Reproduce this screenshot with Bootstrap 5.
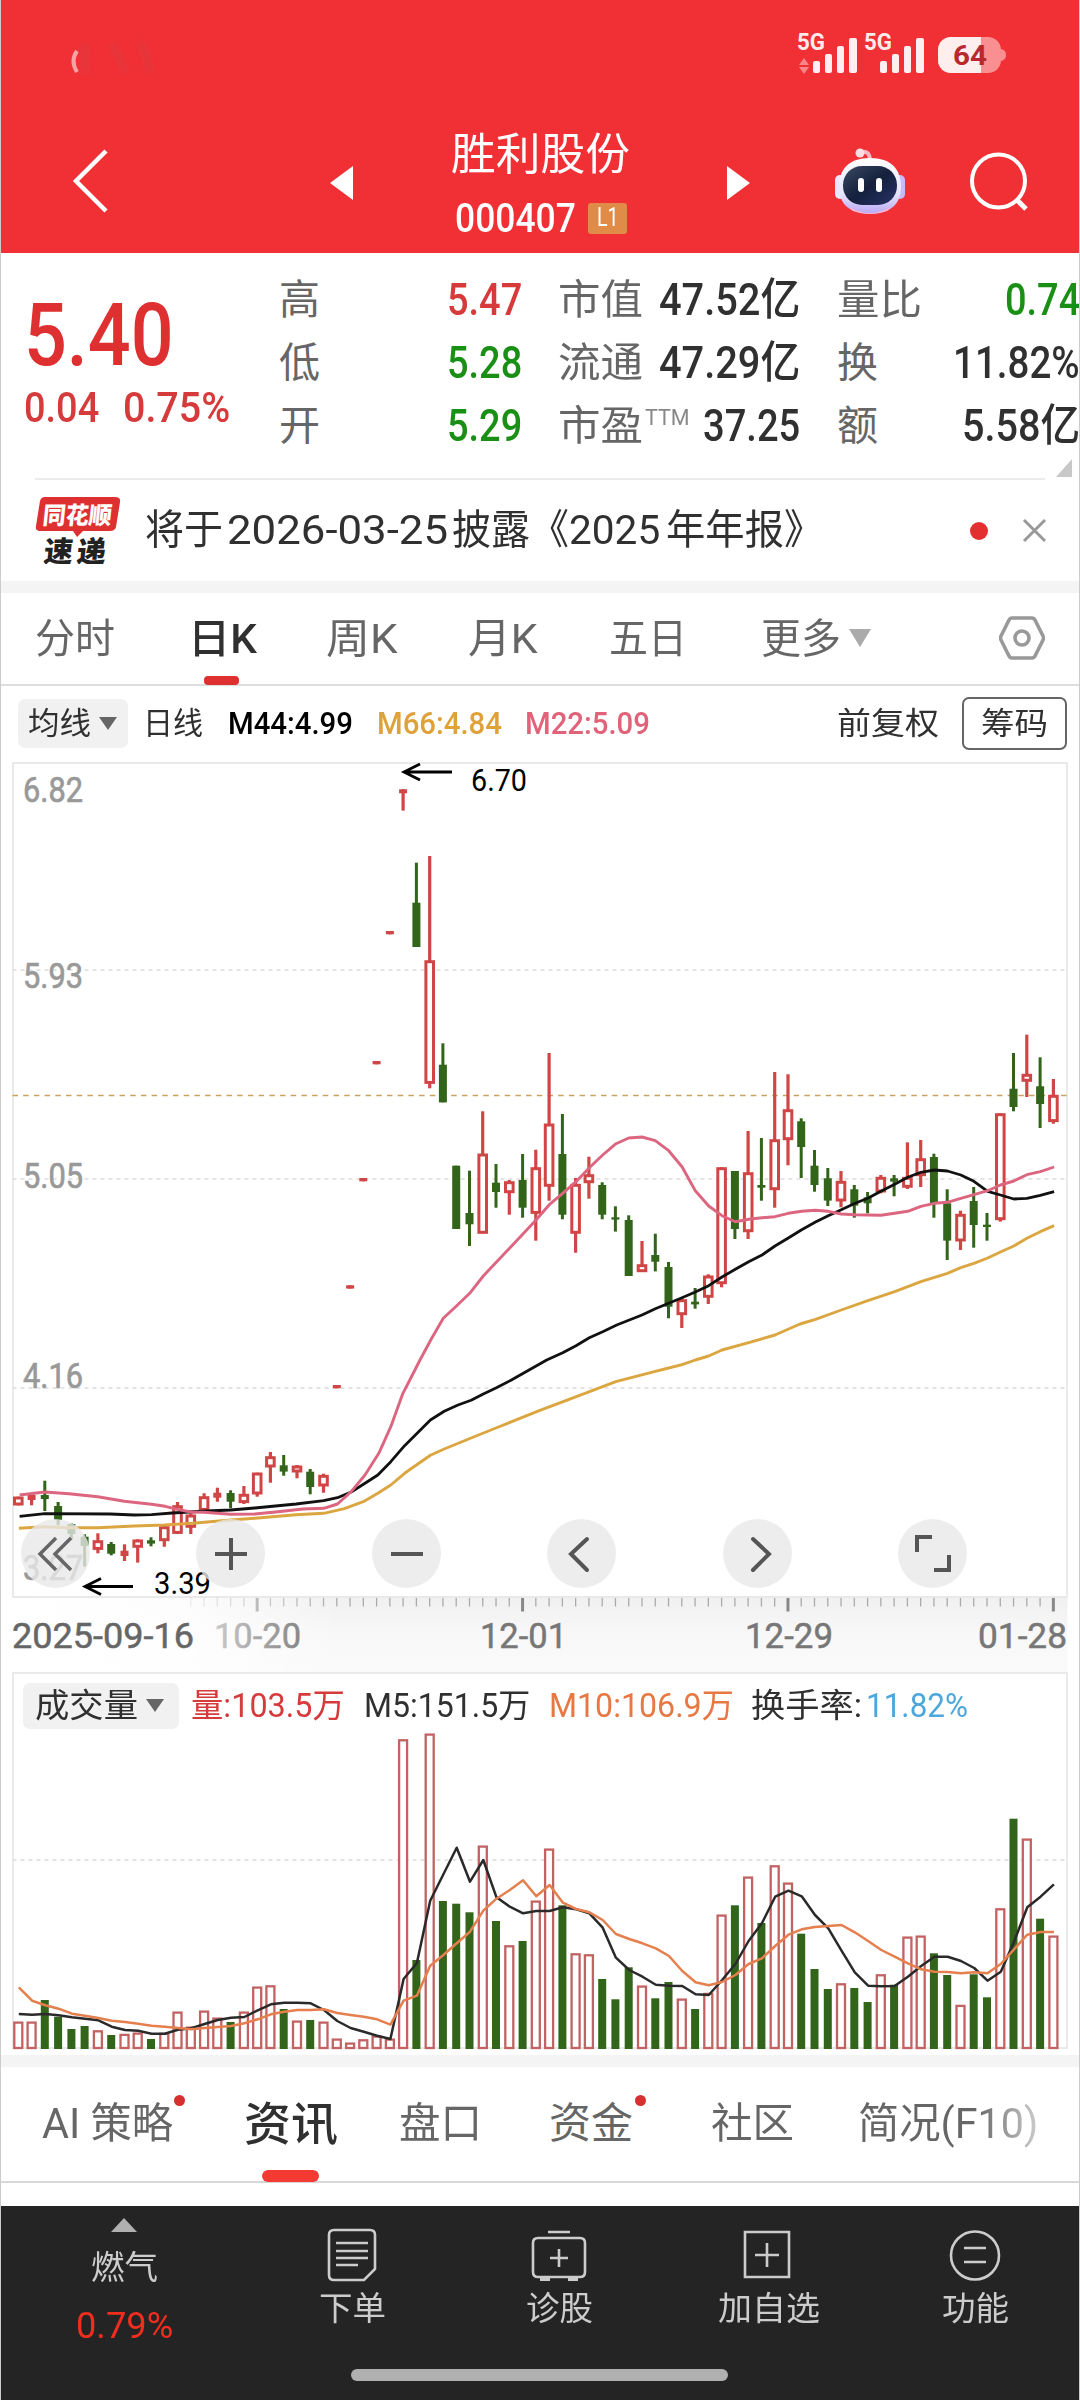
<!DOCTYPE html>
<html lang="zh-CN">
<head>
<meta charset="utf-8">
<meta name="viewport" content="width=device-width, initial-scale=1">
<title>胜利股份 000407</title>
<link rel="stylesheet" href="https://cdn.jsdelivr.net/npm/bootstrap@5.3.0/dist/css/bootstrap.min.css">
<style>
:root{--up:#df3031;--down:#1a8f15;--ink:#303030;--soft:#666}
html,body{margin:0;background:#fff}
body{width:1080px;height:2400px;overflow:hidden;font-family:Roboto,"Noto Sans CJK SC",sans-serif;color:var(--ink);line-height:1}
.phone{width:1080px;height:2400px;border-left:1px solid #ccc;border-right:1px solid #ccc;overflow:hidden}
.phone svg{display:block;flex:none}
.fit{display:inline-block;white-space:nowrap}
.fit>i{display:inline-block;font-style:normal;transform-origin:0 50%}
.cols{display:grid;align-items:center;justify-content:start}
.hero{height:253px;background:#f13036;color:#fff;margin:0 -1px;padding-left:1px}
.status-row{height:110px}
.nav-cols{height:142px;grid-template-columns:329px 117px 280px 108px 135px 80px}
.code-tag{width:39px;height:31px;border-radius:3px;background:#e08c48;font-size:25px;margin-left:12px}
.stock-title{font-size:44px;line-height:52px;margin-top:19px}
.stock-code{font-size:41px;line-height:44px;margin-top:15px;font-weight:500}
.quote{height:226px;grid-template-columns:23px 255px 243px 36px 242px 37px 243px;align-items:start}
.price{font-size:88px;font-weight:500;line-height:106px;color:var(--up);margin-top:29px}
.change{font-size:42px;line-height:50px;font-weight:500;color:#d63a3a;margin-top:-5px;gap:24px}
.stat-list{padding-top:16px}
.stat-line{height:63px;font-size:44px;font-weight:500}
.stat-line b{font-size:41px;font-weight:400;color:var(--soft)}
.stat-line sup{font-size:22px;font-weight:400;color:#888;top:-8px;margin:0 auto 0 2px}
.c-up{color:#d63a3a}.c-down{color:var(--down)}
.news{height:103px;margin:0 34px;border-top:2px solid #ececec;grid-template-columns:110px 825px 52px 30px;font-size:41px}
.news-mark{width:86px;height:68px;margin-top:-2px}
.news-dot{width:18px;height:18px;border-radius:50%;background:#e32f2f}
.band{height:12px;background:#f4f4f4;flex:none}
.period{height:93px;border-bottom:2px solid #dedede;position:relative;font-size:41px;color:var(--soft);grid-template-columns:34px 153px 138px 142px 141px 152px 88px 150px 46px}
.period .fit{padding-top:3px}
.bar-sm{position:absolute;left:203px;bottom:-1px;width:35px;height:9px;border-radius:4px;background:#df3031}
.on{color:var(--ink);font-weight:500}
.ma{height:76px;font-size:31px;grid-template-columns:17px 125px 85px 149px 148px 312px 125px 105px}
.pill{background:#f1f1f1;border-radius:7px;height:49px;width:110px}
.chips{width:105px;height:53px;border:2px solid #666;border-radius:7px}
.kchart{height:910px;position:relative}
.tools{position:absolute;left:20px;top:757px;gap:106.4px}
.tool{width:69px;height:69px;border-radius:50%;background:rgba(232,232,232,.8)}
.vol{height:383px;position:relative}
.vol-head{position:absolute;left:0;top:10px;height:48px;font-size:33px;grid-template-columns:22px 168px 173px 185px 202px 115px 105px}
.vol-head .pill{width:156px;height:46px}
.tabs2{height:117px;border-bottom:2px solid #d8d8d8;position:relative;font-size:42px;color:var(--soft);grid-template-columns:41px 202px 155px 150px 162px 147px 180px}
.tabs2 .on{font-size:46px}
.bar-lg{position:absolute;left:261px;bottom:-1px;width:57px;height:12px;border-radius:6px;background:#f43b33}
.red-dot{position:absolute;width:11px;height:11px;border-radius:50%;background:#d63030;top:28px}
.fade-end{background:linear-gradient(90deg,#666 65%,#ccc);-webkit-background-clip:text;background-clip:text;color:transparent;line-height:1.3}
.dock{height:194px;margin:23px -1px 0;background:#242424;color:#ccc;font-size:33px;position:relative}
.dock-cols{height:140px;grid-template-columns:20px 208px 248px 166px 250px 166px;align-items:start}
.dock-item{text-align:center}
.home{position:absolute;left:351px;top:163px;width:377px;height:12px;border-radius:6px;background:#b0b0b0}
</style>
<script src="https://cdn.jsdelivr.net/npm/bootstrap@5.3.0/dist/js/bootstrap.bundle.min.js"></script>
</head>
<body>
<main class="phone d-flex flex-column">
<header class="hero">
  <div class="status-row">
    <svg width="1078" height="110">
      <defs><filter id="sm"><feGaussianBlur stdDeviation="3"/></filter></defs>
      <g filter="url(#sm)" stroke="#c94444" stroke-width="4" fill="none"><path d="M84 44v30M112 44l12 28M140 42l10 30" opacity=".6"/></g>
      <path d="M76 51q-7 10 0 21" stroke="#f8c0c0" stroke-width="4" fill="none" opacity=".8"/>
      <g fill="#fff" fill-opacity=".92">
        <text x="796" y="50" font-size="23" font-weight="700" textLength="28" lengthAdjust="spacingAndGlyphs">5G</text>
        <text x="863" y="50" font-size="23" font-weight="700" textLength="28" lengthAdjust="spacingAndGlyphs">5G</text>
        <g id="sig"><rect x="812" y="61" width="7" height="12" rx="2"/><rect x="824" y="54" width="7" height="19" rx="2"/><rect x="836" y="46" width="7" height="27" rx="2"/><rect x="848" y="38" width="8" height="35" rx="2"/></g>
        <use href="#sig" x="67"/>
        <path d="M798 65l5-7 5 7zM798 67l5 7 5-7z" opacity=".45"/>
      </g>
      <rect x="937" y="37" width="63" height="36" rx="13" fill="#fa8f91"/>
      <path d="M950 37h30v36h-30a13 13 0 0 1-13-13v-10a13 13 0 0 1 13-13z" fill="#ffeeee"/>
      <path d="M1000 49q5 1 5 6t-5 6z" fill="#fa8f91"/>
      <text x="952" y="65" font-size="28" font-weight="700" fill="#b8282c" textLength="34" lengthAdjust="spacingAndGlyphs">64</text>
    </svg>
  </div>
  <div class="cols nav-cols">
    <svg class="ms-auto me-auto" style="transform:translate(-75px,-1px)" width="40" height="68" fill="none" stroke="#fff" stroke-width="4.5"><path d="M35 5L5 35L35 65"/></svg>
    <svg width="24" height="36" class="mt-1"><path d="M0 18L23 1V35z" fill="#fff"/></svg>
    <div class="ps-1 align-self-start">
      <div class="stock-title"><span class="fit" data-w="179">胜利股份</span></div>
      <div class="stock-code d-flex align-items-center"><span class="fit ms-1" data-w="121">000407</span><span class="code-tag d-flex align-items-center justify-content-center fw-normal"><span class="fit" data-w="22">L1</span></span></div>
    </div>
    <svg width="24" height="36" class="mt-1"><path d="M23 18L0 1V35z" fill="#fff"/></svg>
    <svg width="70" height="68" viewBox="0 0 70 68">
      <defs><linearGradient id="rb" x1="0" y1="0" x2="0" y2="1"><stop offset="0" stop-color="#fff"/><stop offset=".65" stop-color="#e4e2ff"/><stop offset="1" stop-color="#b9a6f2"/></linearGradient><linearGradient id="rf" x1="0" y1="0" x2="1" y2="1"><stop offset="0" stop-color="#3c4a66"/><stop offset=".5" stop-color="#14203c"/><stop offset="1" stop-color="#28336a"/></linearGradient></defs>
      <path d="M26 5Q35 3 35 14" stroke="#f8b6c4" stroke-width="4" fill="none"/><circle cx="25" cy="6" r="4.5" fill="#ffdbe3"/>
      <rect x="0" y="28" width="10" height="24" rx="5" fill="#e9e6ff"/><rect x="60" y="28" width="10" height="24" rx="5" fill="#c6baf8"/>
      <path d="M35 11C56 11 66 22 66 40S54 67 35 67 4 58 4 40 14 11 35 11z" fill="url(#rb)"/>
      <path d="M14 60Q35 72 56 60L52 64Q35 70 18 64z" fill="#ffb4c8"/>
      <rect x="8" y="19" width="54" height="39" rx="19" fill="url(#rf)"/>
      <rect x="23" y="31" width="6" height="14" rx="3" fill="#fff"/><rect x="41" y="31" width="6" height="14" rx="3" fill="#fff"/>
    </svg>
    <svg width="62" height="64" fill="none" stroke="#fff" stroke-width="4"><circle cx="28.500" cy="32" r="26.500"/><path d="M46 50l10 10" stroke-width="5"/></svg>
  </div>
</header>

<section class="cols quote">
  <span></span>
  <div>
    <div class="price"><span class="fit" data-w="150">5.40</span></div>
    <div class="change d-flex"><span class="fit" data-w="75">0.04</span><span class="fit" data-w="107">0.75%</span></div>
  </div>
  <div class="stat-list">
    <div class="stat-line d-flex align-items-center justify-content-between"><b>高</b><span class="fit c-up" data-w="75">5.47</span></div>
    <div class="stat-line d-flex align-items-center justify-content-between"><b>低</b><span class="fit c-down" data-w="75">5.28</span></div>
    <div class="stat-line d-flex align-items-center justify-content-between"><b>开</b><span class="fit c-down" data-w="75">5.29</span></div>
  </div>
  <span></span>
  <div class="stat-list">
    <div class="stat-line d-flex align-items-center justify-content-between"><b class="fit" data-w="85">市值</b><span class="fit" data-w="141">47.52亿</span></div>
    <div class="stat-line d-flex align-items-center justify-content-between"><b class="fit" data-w="85">流通</b><span class="fit" data-w="141">47.29亿</span></div>
    <div class="stat-line d-flex align-items-center"><b class="fit" data-w="85">市盈</b><sup><span class="fit" data-w="45">TTM</span></sup><span class="fit" data-w="97">37.25</span></div>
  </div>
  <span></span>
  <div class="stat-list">
    <div class="stat-line d-flex align-items-center justify-content-between"><b class="fit" data-w="85">量比</b><span class="fit c-down" data-w="75">0.74</span></div>
    <div class="stat-line d-flex align-items-center justify-content-between"><b>换</b><span class="fit" data-w="127">11.82%</span></div>
    <div class="stat-line d-flex align-items-center justify-content-between"><b>额</b><span class="fit" data-w="118">5.58亿</span></div>
    <svg class="ms-auto me-2" width="16" height="20"><path d="M16 1V19H0z" fill="#c8c8c8"/></svg>
  </div>
</section>

<section class="cols news">
  <svg class="news-mark" viewBox="0 0 86 68">
    <path d="M10 1H80Q86 1 85 6L81 31Q80 35 75 35H48L42 41L38 35H5Q0 35 1 30L5 5Q6 1 10 1z" fill="#df3031"/>
    <text x="7" y="28" font-size="24" font-weight="900" fill="#fff" textLength="69" lengthAdjust="spacingAndGlyphs" transform="skewX(-6) translate(3 0)">同花顺</text>
    <text x="10" y="66" font-size="29" font-weight="900" fill="#222" textLength="62" transform="skewX(-6) translate(5 0)">速递</text>
  </svg>
  <div class="d-flex align-items-center"><span class="fit" data-w="78">将于</span><span class="fit ms-1" data-w="221">2026-03-25</span><span class="fit ms-1" data-w="78">披露</span><span class="fit" data-w="39">《</span><span class="fit" data-w="91">2025</span><span class="fit" style="margin-left:6px" data-w="118">年年报</span><span class="fit" data-w="39">》</span></div>
  <span class="news-dot"></span>
  <svg width="26" height="26" stroke="#999" stroke-width="3"><path d="M2 2L23 23M23 2L2 23"/></svg>
</section>
<div class="band"></div>

<nav class="cols period">
  <span></span><span class="fit" data-w="80">分时</span><span class="fit on" data-w="69">日K</span><span class="fit" data-w="72">周K</span><span class="fit" data-w="70">月K</span><span class="fit" data-w="78">五日</span><span class="fit" data-w="80">更多</span>
  <svg width="22" height="18"><path d="M0 0H22L11 18z" fill="#aaa"/></svg>
  <svg width="46" height="46" fill="none" stroke="#999" stroke-width="3.600"><path d="M13 3H33Q35 3 36 5L44 21Q45 23 44 25L36 41Q35 43 33 43H13Q11 43 10 41L2 25Q1 23 2 21L10 5Q11 3 13 3z"/><circle cx="23" cy="23" r="7"/></svg>
  <i class="bar-sm"></i>
</nav>

<section class="cols ma">
  <span></span>
  <span class="pill d-flex align-items-center ps-2 gap-2"><span class="fit" style="margin-left:2px" data-w="63">均线</span><svg width="18" height="13"><path d="M0 0H18L9 13z" fill="#666"/></svg></span>
  <span class="fit" data-w="60">日线</span>
  <span class="fit fw-medium" data-w="125" style="color:#000">M44:4.99</span>
  <span class="fit fw-medium" data-w="125" style="color:#dfa239">M66:4.84</span>
  <span class="fit fw-medium" data-w="125" style="color:#e0637a">M22:5.09</span>
  <span class="fit" data-w="102">前复权</span>
  <span class="chips d-flex align-items-center justify-content-center"><span class="fit" data-w="67">筹码</span></span>
</section>

<section class="kchart">
  <svg id="k" width="1078" height="910" viewBox="1 762 1078 910"></svg>
  <div class="tools d-flex">
    <span class="tool"><svg width="69" height="69" fill="none" stroke="#666" stroke-width="3.500"><path d="M35 19L19 35L35 51M50 19L34 35L50 51"/></svg></span>
    <span class="tool"><svg width="69" height="69" stroke="#555" stroke-width="4"><path d="M19 35H51M35 19V51"/></svg></span>
    <span class="tool"><svg width="69" height="69" stroke="#555" stroke-width="4"><path d="M19 35H51"/></svg></span>
    <span class="tool"><svg width="69" height="69" fill="none" stroke="#555" stroke-width="4" stroke-linecap="round"><path d="M40 20L24 35L40 51"/></svg></span>
    <span class="tool"><svg width="69" height="69" fill="none" stroke="#555" stroke-width="4" stroke-linecap="round"><path d="M30 20L46 35L30 51"/></svg></span>
    <span class="tool"><svg width="69" height="69" fill="none" stroke="#555" stroke-width="4"><path d="M19 33V18H34M51 36V51H36"/></svg></span>
  </div>
</section>

<section class="vol">
  <svg id="v" width="1078" height="383" viewBox="1 1672 1078 383"></svg>
  <div class="cols vol-head">
    <span></span>
    <span class="pill d-flex align-items-center gap-2"><span class="fit" style="margin-left:12px" data-w="103">成交量</span><svg width="18" height="13"><path d="M0 0H18L9 13z" fill="#666"/></svg></span>
    <span class="fit" data-w="154" style="color:#d63a3a">量:103.5万</span>
    <span class="fit" data-w="166">M5:151.5万</span>
    <span class="fit" data-w="185" style="color:#e87843">M10:106.9万</span>
    <span class="fit" data-w="111">换手率:</span>
    <span class="fit" data-w="102" style="color:#4da6dc">11.82%</span>
  </div>
</section>
<div class="band"></div>

<nav class="cols tabs2">
  <span></span><span class="fit" data-w="131">AI 策略</span><span class="fit on" data-w="94">资讯</span><span class="fit" data-w="83">盘口</span><span class="fit" data-w="84">资金</span><span class="fit" data-w="83">社区</span><span class="fit tail" data-w="180">简况(F10)</span>
  <i class="bar-lg"></i><i class="red-dot" style="left:173px"></i><i class="red-dot" style="left:634px"></i>
</nav>

<footer class="dock">
  <div class="cols dock-cols">
    <span></span>
    <div class="dock-item d-flex flex-column align-items-center pt-2"><svg width="26" height="20"><path d="M13 4L26 18H0z" fill="#b0b0b0"/></svg><span class="fit" style="margin-top:17px" data-w="67">燃气</span><span class="fit" style="margin-top:22px;font-size:37px;line-height:40px;color:#f02d1e" data-w="97">0.79%</span></div>
    <div class="dock-item d-flex flex-column align-items-center"><svg width="60" height="60" style="margin-top:20px" fill="none" stroke="#ccc" stroke-width="2.600"><path d="M12 4H48Q53 4 53 9V43L42 54H12Q7 54 7 49V9Q7 4 12 4zM14 17H46M14 25H46M14 32H46M14 39H36"/></svg><span class="fit" style="margin-top:6px" data-w="67">下单</span></div>
    <div class="dock-item d-flex flex-column align-items-center"><svg width="60" height="60" style="margin-top:20px" fill="none" stroke="#ccc" stroke-width="2.600"><path d="M19 6H41M9 12H51Q56 12 56 17V46Q56 51 51 51H9Q4 51 4 46V17Q4 12 9 12zM30 23V41M21 32H39"/><path d="M11 53h10M39 53h10" stroke-width="4"/></svg><span class="fit" style="margin-top:6px" data-w="67">诊股</span></div>
    <div class="dock-item d-flex flex-column align-items-center"><svg width="60" height="60" style="margin-top:20px" fill="none" stroke="#ccc" stroke-width="2.600"><path d="M8 6H52V51H8zM30 17V41M18 29H42"/></svg><span class="fit" style="margin-top:6px" data-w="102">加自选</span></div>
    <div class="dock-item d-flex flex-column align-items-center"><svg width="60" height="60" style="margin-top:20px" fill="none" stroke="#ccc" stroke-width="2.600"><circle cx="30" cy="29.500" r="24"/><path d="M19 22H41M19 36H41"/></svg><span class="fit" style="margin-top:6px" data-w="67">功能</span></div>
  </div>
  <i class="home"></i>
</footer>
</main>

<script>
document.querySelectorAll('[data-w]').forEach(function(el){
  var w=+el.dataset.w,i=document.createElement('i');
  while(el.firstChild)i.appendChild(el.firstChild);
  el.appendChild(i);
  if(el.classList.contains('tail'))i.classList.add('fade-end');
  var n=i.offsetWidth;
  el.style.width=w+'px';
  i.style.transform='scaleX('+(w/n)+')';
});
var X=function(i){return 18.3+13.27*i};
var RED='#d04545',GRN='#32651a';
// Candles by block: origin, then [direction, high, low, body top, body bottom] in thirds of a pixel.
var blocks=[
[1380,[['r',350,376,351,375],['r',342,376,345,360],['g',302,393,345,357],['g',366,436,378,420],['g',430,478,432,462],['g',463,560,470,498],['r',460,520,482,508],['g',486,526,492,521],['r',493,543,512,528],['r',478,548,480,502],['g',472,499,481,491],['r',438,500,440,482],['r',366,462,377,460],['r',400,462,405,442],['r',340,393,350,391],['r',323,365,338,353],['g',331,385,339,365],['r',318,372,343,368],['r',278,350,279,342],['r',216,308,230,261],['g',225,287,256,275],['r',255,295,258,276],['g',267,343,275,321],['r',281,338,286,318],['r',15,25,15,25],['r',-284,-274,-284,-274],['r',-606,-596,-606,-596],['r',-957,-947,-957,-947],['r',-1347,-1337,-1347,-1337],['r',-1772,-1708,-1772,-1760]]],
[750,[['g',338,591,458,591],['r',318,1015,632,1000],['g',880,1057,944,1057]]],
[1040,[['g',377,567,377,567],['g',392,618,519,553],['r',214,580,342,580],['g',372,503,428,456],['r',420,524,425,458],['g',342,533,420,503],['r',329,602,383,520],['r',39,482,252,439],['g',222,538,342,524],['r',414,638,433,580],['r',350,476,404,428],['g',427,538,435,524],['g',499,575,532,539],['g',526,708,540,708],['r',603,696,674,695],['g',581,694,645,665],['g',666,835,681,800],['r',775,864,779,824],['g',744,806,785,793],['r',703,792,708,772],['r',382,742,383,731],['g',393,597,393,567],['r',273,597,398,575],['g',294,482,435,443],['r',96,503,299,449],['r',103,376,209,299]]],
[970,[['g',445,624,454,531],['g',540,665,587,645],['g',594,708,625,692],['r',603,712,634,693],['g',645,743,658,707],['g',666,730,682,700],['r',615,670,622,666],['g',615,679,625,635],['r',517,657,622,652],['r',510,651,566,617],['g',551,743,561,700],['g',658,870,700,812],['r',722,840,733,813],['g',651,833,693,765],['g',729,812,764,771],['r',430,755,431,749],['g',249,424,356,411],['r',194,381,313,334],['g',262,474,349,402],['r',327,461,376,455]]]];
var R=function(x,y,w,h,f,s){return '<rect x="'+x.toFixed(1)+'" y="'+y.toFixed(1)+'" width="'+w+'" height="'+h.toFixed(1)+'" fill="'+f+'"'+(s||'')+'/>'};
function T(x,y,w,s,size,fill,extra){return '<text x="'+x+'" y="'+y+'" font-size="'+size+'" fill="'+fill+'" textLength="'+w+'" lengthAdjust="spacingAndGlyphs" '+(extra||'')+'>'+s+'</text>'}
function dash(y,c,d){return '<path d="M12.500 '+y+'H1067" stroke="'+c+'" stroke-width="1.500" stroke-dasharray="'+d+'"/>'}
var o='<defs><linearGradient id="ax" x1="0" x2="0" y1="0" y2="1"><stop offset="0" stop-color="#f0f0f0"/><stop offset=".5" stop-color="#f8f8f8"/><stop offset="1" stop-color="#fafafa"/></linearGradient><linearGradient id="wf"><stop offset="0" stop-color="#fff"/><stop offset=".5" stop-color="#fff" stop-opacity=".85"/><stop offset="1" stop-color="#fff" stop-opacity="0"/></linearGradient></defs>';
o+='<rect x="12.500" y="1597" width="1055" height="76" fill="url(#ax)"/>';
for(var i=13;i<79;i++){var M=i%20==18;o+='<path d="M'+X(i)+' 1597.500v'+(M?14:9)+'" stroke="'+(M?'#888':'#aaa')+'" stroke-width="'+(M?3:1.3)+'"/>';}
o+=T(214,1648,87,'10-20',34.5,'#666','stroke="#666" stroke-width=".5"')+T(480,1648,87,'12-01',34.5,'#777','stroke="#777" stroke-width=".5"')+T(745,1648,88,'12-29',34.5,'#777','stroke="#777" stroke-width=".5"')+T(978,1648,89,'01-28',34.5,'#777','stroke="#777" stroke-width=".5"');
o+='<rect x="12" y="1598" width="330" height="74" fill="url(#wf)"/>'+T(12,1648,182,'2025-09-16',34.5,'#666','stroke="#666" stroke-width=".5"');
o+='<rect x="13" y="763" width="1054" height="834" fill="none" stroke="#e8e8e8" stroke-width="1.800"/>';
o+=dash(970,'#ddd','4 4')+dash(1179,'#ddd','4 4')+dash(1388,'#ddd','4 4')+dash(1095.6,'#c9a25f','5.500 5.200');
[['6.82',802],['5.93',987.5],['5.05',1187.5],['4.16',1388],['3.27',1580]].forEach(function(a){o+=T(23,a[1],60,a[0],35,'#999','stroke="#999" stroke-width=".7"')});
var k=0;
blocks.forEach(function(b){b[1].forEach(function(c){
  var x=X(k++),y=function(v){return b[0]+v/3},t=y(c[3]),h=(c[4]-c[3])/3;
  if(c[0]=='g'){o+=R(x-1.5,y(c[1]),3,(c[2]-c[1])/3,GRN)+R(x-4,t,8,h,GRN);}
  else{o+=R(x-1.6,y(c[1]),3.2,(c[2]-c[1])/3,RED);
    if(h<6)o+=R(x-4,t,8,h,RED);else o+=R(x-3.8,t+1,7.6,h-2,'#fff',' stroke="'+RED+'" stroke-width="3"');}
})});
function line(parts,c,w){var p=[];parts.forEach(function(g){for(var j=0;j<g[3].length;j+=2)p.push((g[0]+g[3][j]/g[1]).toFixed(1)+' '+(g[2]+g[3][j+1]/3).toFixed(1))});return '<polyline points="'+p.join(',')+'" fill="none" stroke="'+c+'" stroke-width="'+w+'" stroke-linejoin="round"/>'}
var s=2.904;
o+=line([[0,s,1380,[55,445,130,440,200,443,284,443,390,438,477,435,560,430,670,420,740,415,860,404,940,400,1000,386,1055,365,1097,340,1135,315,1175,280,1250,226,1290,207,1368,174,1440,144,1568,91]],[540,s,1380,[100,52,220,5]],[400,3,1040,[766,994,806,984,846,974,886,960,926,948,966,930,1046,908,1125,885,1200,852]],[540,s,970,[800,1048,875,1020,952,992,1030,965,1106,935,1183,910,1222,893,1260,880,1300,864,1337,846,1376,828,1414,805,1453,785,1493,767]]],'#dba640',2.9);
o+=line([[0,s,1380,[57,409,130,401,320,402,390,405,440,404,500,399,600,393,670,390,740,384,860,372,940,362,980,353,1020,336,1060,310,1097,285,1135,245,1175,197,1250,120,1290,94,1330,75,1368,61,1405,41,1440,24,1485,0]],[400,3,1040,[440,960,488,938,528,917,568,893,608,875,650,855,726,825,766,806,846,773,886,756,926,737,966,711,1006,688,1046,665,1086,645,1125,618,1165,594]],[540,s,970,[760,779,800,756,837,737,875,719,915,700,952,685,990,664,1030,643,1068,622,1106,607,1145,600,1183,603,1222,615,1260,634,1300,664,1337,675,1376,687,1414,685,1453,676,1493,665]]],'#111',2.8);
o+=line([[0,s,1380,[57,345,130,336,200,341,284,350,361,364,440,373,480,379,515,388,554,396,592,397,670,403,740,402,800,396,880,387,940,385,980,372,1020,335,1060,285,1100,220,1135,140,1170,40,1190,0]],[400,3,1040,[60,960,95,895,130,835,170,797,209,760,250,708,290,665,330,623,368,583,408,540,448,494,488,460,528,425,568,383,608,345,648,311,686,294,726,291,766,302,806,332,846,380,886,452,926,498,966,527,1006,545,1046,538,1086,533,1125,530]],[540,s,970,[721,730,760,724,800,721,837,724,875,732,915,734,990,736,1030,730,1068,724,1106,709,1145,700,1183,697,1222,685,1260,674,1300,662,1337,645,1376,633,1414,614,1453,605,1493,591]]],'#dc6680',2.9);
o+='<g fill="none" stroke="#000" stroke-width="2.800"><path d="M404 772H452M420 764L404 772L420 780"/><path d="M85 1586.500H133M101 1578.500L85 1586.500L101 1594.500"/></g>';
o+=T(471,791,56,'6.70',30.5,'#000')+T(154,1594,57,'3.39',30.5,'#000');
document.getElementById('k').innerHTML=o;

// Volume bars: direction and top, in thirds of a pixel below 1660.
var vols='r1086 r1086 g1020 g1070 g1107 g1098 r1112 g1125 r1123 r1119 g1137 r1120 r1056 r1101 r1053 r1074 g1086 r1056 r981 r977 g1047 r1083 g1080 r1086 r1137 r1149 r1139 r1128 r1137 r239 g900 r222 g723 g731 g757 r558 g783 r857 g843 r723 r567 g736 r881 r884 g957 g1018 g922 r978 g1015 g966 r1017 g1047 r1000 r765 g736 r651 g789 r617 r669 g821 g927 g987 r971 g984 g1026 r944 g974 r831 r828 g880 g945 r1036 g943 g1012 r746 g476 r537 g776 r828'.split(' ');
var m5=[1062,1064,1062,1066,1072,1076,1081,1100,1110,1112,1121,1121,1109,1105,1092,1080,1073,1071,1051,1033,1028,1028,1030,1050,1083,1104,1115,1127,1137,957,909,722,643,563,665,600,712,740,760,753,753,742,748,760,803,893,930,950,974,977,978,1003,1005,960,912,843,790,710,692,709,765,805,872,937,977,979,978,950,918,890,890,903,924,962,935,845,742,710,673];
var m10=[982,1022,1036,1046,1061,1067,1074,1082,1086,1091,1097,1100,1104,1108,1104,1101,1098,1090,1078,1063,1055,1050,1050,1048,1059,1065,1070,1078,1094,1022,1007,917,885,850,815,752,716,690,661,709,675,728,747,757,780,822,837,850,865,888,933,967,976,966,945,912,895,858,824,808,801,798,795,817,843,870,890,910,928,935,936,940,937,940,912,868,824,816,816];
var q='<rect x="13" y="1673" width="1054" height="375" fill="none" stroke="#e8e8e8" stroke-width="1.800"/>'+dash(1860,'#ddd','4 4');
vols.forEach(function(d,i){var t=1660+d.slice(1)/3,x=X(i),b=2049;
  q+=d[0]=='g'?R(x-4,t,8,b-t,GRN):R(x-4,t+.6,8,b-t-1.6,'#fff',' stroke="#c26262" stroke-width="2.300"');});
function ml(a,c){return '<polyline points="'+a.map(function(v,i){return (X(i)+.5).toFixed(1)+' '+(1660+v/3).toFixed(1)}).join(',')+'" fill="none" stroke="'+c+'" stroke-width="2.500" stroke-linejoin="round"/>'}
q+=ml(m5,'#2a2a2a')+ml(m10,'#e57f4e');
document.getElementById('v').innerHTML=q;
</script>
</body>
</html>
